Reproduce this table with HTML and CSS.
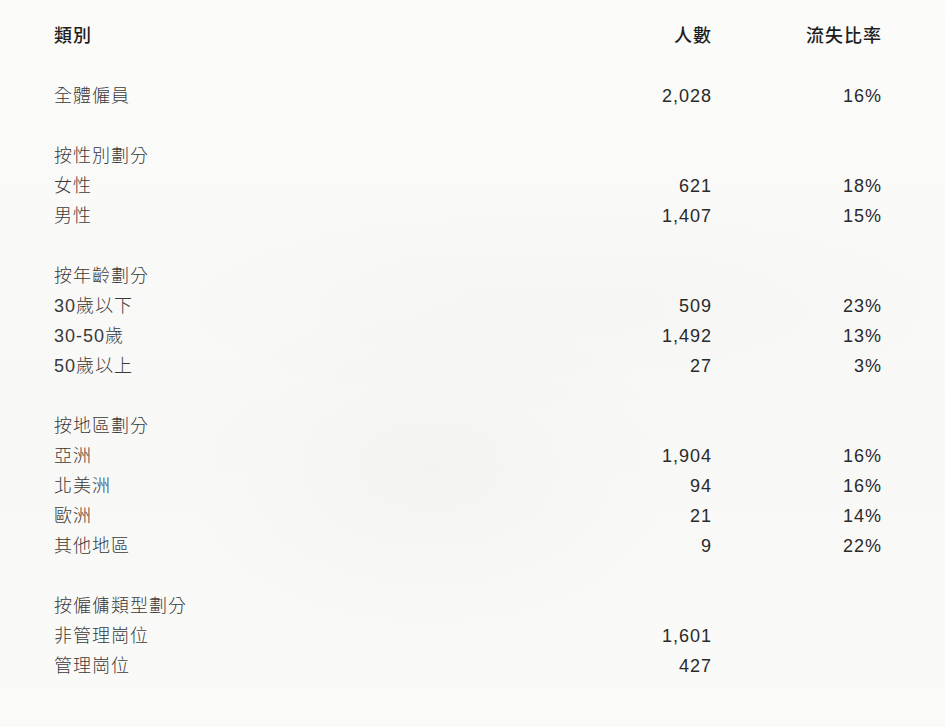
FILE: index.html
```html
<!DOCTYPE html>
<html lang="zh-Hant">
<head>
<meta charset="utf-8">
<link rel="stylesheet" href="styles.css">
</head>
<body>
<div class="page">
  <div class="table">
    <div class="row head"><span class="label">類別</span><span class="num">人數</span><span class="rate">流失比率</span></div>

    <div class="group">
      <div class="row"><span class="label">全體僱員</span><span class="num">2,028</span><span class="rate">16%</span></div>
    </div>

    <div class="group">
      <div class="row"><span class="label">按性別劃分</span><span class="num"></span><span class="rate"></span></div>
      <div class="row"><span class="label">女性</span><span class="num">621</span><span class="rate">18%</span></div>
      <div class="row"><span class="label">男性</span><span class="num">1,407</span><span class="rate">15%</span></div>
    </div>

    <div class="group">
      <div class="row"><span class="label">按年齡劃分</span><span class="num"></span><span class="rate"></span></div>
      <div class="row"><span class="label">30歲以下</span><span class="num">509</span><span class="rate">23%</span></div>
      <div class="row"><span class="label">30-50歲</span><span class="num">1,492</span><span class="rate">13%</span></div>
      <div class="row"><span class="label">50歲以上</span><span class="num">27</span><span class="rate">3%</span></div>
    </div>

    <div class="group">
      <div class="row"><span class="label">按地區劃分</span><span class="num"></span><span class="rate"></span></div>
      <div class="row"><span class="label">亞洲</span><span class="num">1,904</span><span class="rate">16%</span></div>
      <div class="row"><span class="label">北美洲</span><span class="num">94</span><span class="rate">16%</span></div>
      <div class="row"><span class="label">歐洲</span><span class="num">21</span><span class="rate">14%</span></div>
      <div class="row"><span class="label">其他地區</span><span class="num">9</span><span class="rate">22%</span></div>
    </div>

    <div class="group">
      <div class="row"><span class="label">按僱傭類型劃分</span><span class="num"></span><span class="rate"></span></div>
      <div class="row"><span class="label">非管理崗位</span><span class="num">1,601</span><span class="rate"></span></div>
      <div class="row"><span class="label">管理崗位</span><span class="num">427</span><span class="rate"></span></div>
    </div>
  </div>
</div>
</body>
</html>
```

FILE: styles.css
```css
html, body {
  margin: 0;
  padding: 0;
}
body {
  width: 945px;
  height: 727px;
  overflow: hidden;
  background-color: #f9f9f8;
  background-image:
    radial-gradient(ellipse 260px 180px at 430px 470px, rgba(0,0,0,0.018), rgba(0,0,0,0)),
    radial-gradient(ellipse 420px 120px at 560px 300px, rgba(0,0,0,0.015), rgba(0,0,0,0)),
    linear-gradient(180deg, #fbfbfa 0%, #f8f8f7 60%, #fafaf9 100%);
  font-family: "Liberation Sans", "Noto Sans CJK TC", sans-serif;
  color: #333333;
}
.page {
  padding: 21px 0 0 54px;
}
.table {
  width: 827px;
  display: flex;
  flex-direction: column;
}
.group {
  margin-top: 30px;
  display: flex;
  flex-direction: column;
}
.row {
  display: grid;
  grid-template-columns: 1fr 150px 170px;
  height: 30px;
  line-height: 31px;
  font-size: 18px;
  letter-spacing: 1px;
  font-weight: 400;
  color: #3a3a3a;
}
.row .label {
  font-weight: 300;
}
.row .num, .row .rate {
  text-align: right;
  margin-right: -1px;
  color: #2a2a2a;
}
.head {
  color: #1e1e1e;
}
.head .label, .head .num, .head .rate {
  font-weight: 500;
  color: #1e1e1e;
}
```
